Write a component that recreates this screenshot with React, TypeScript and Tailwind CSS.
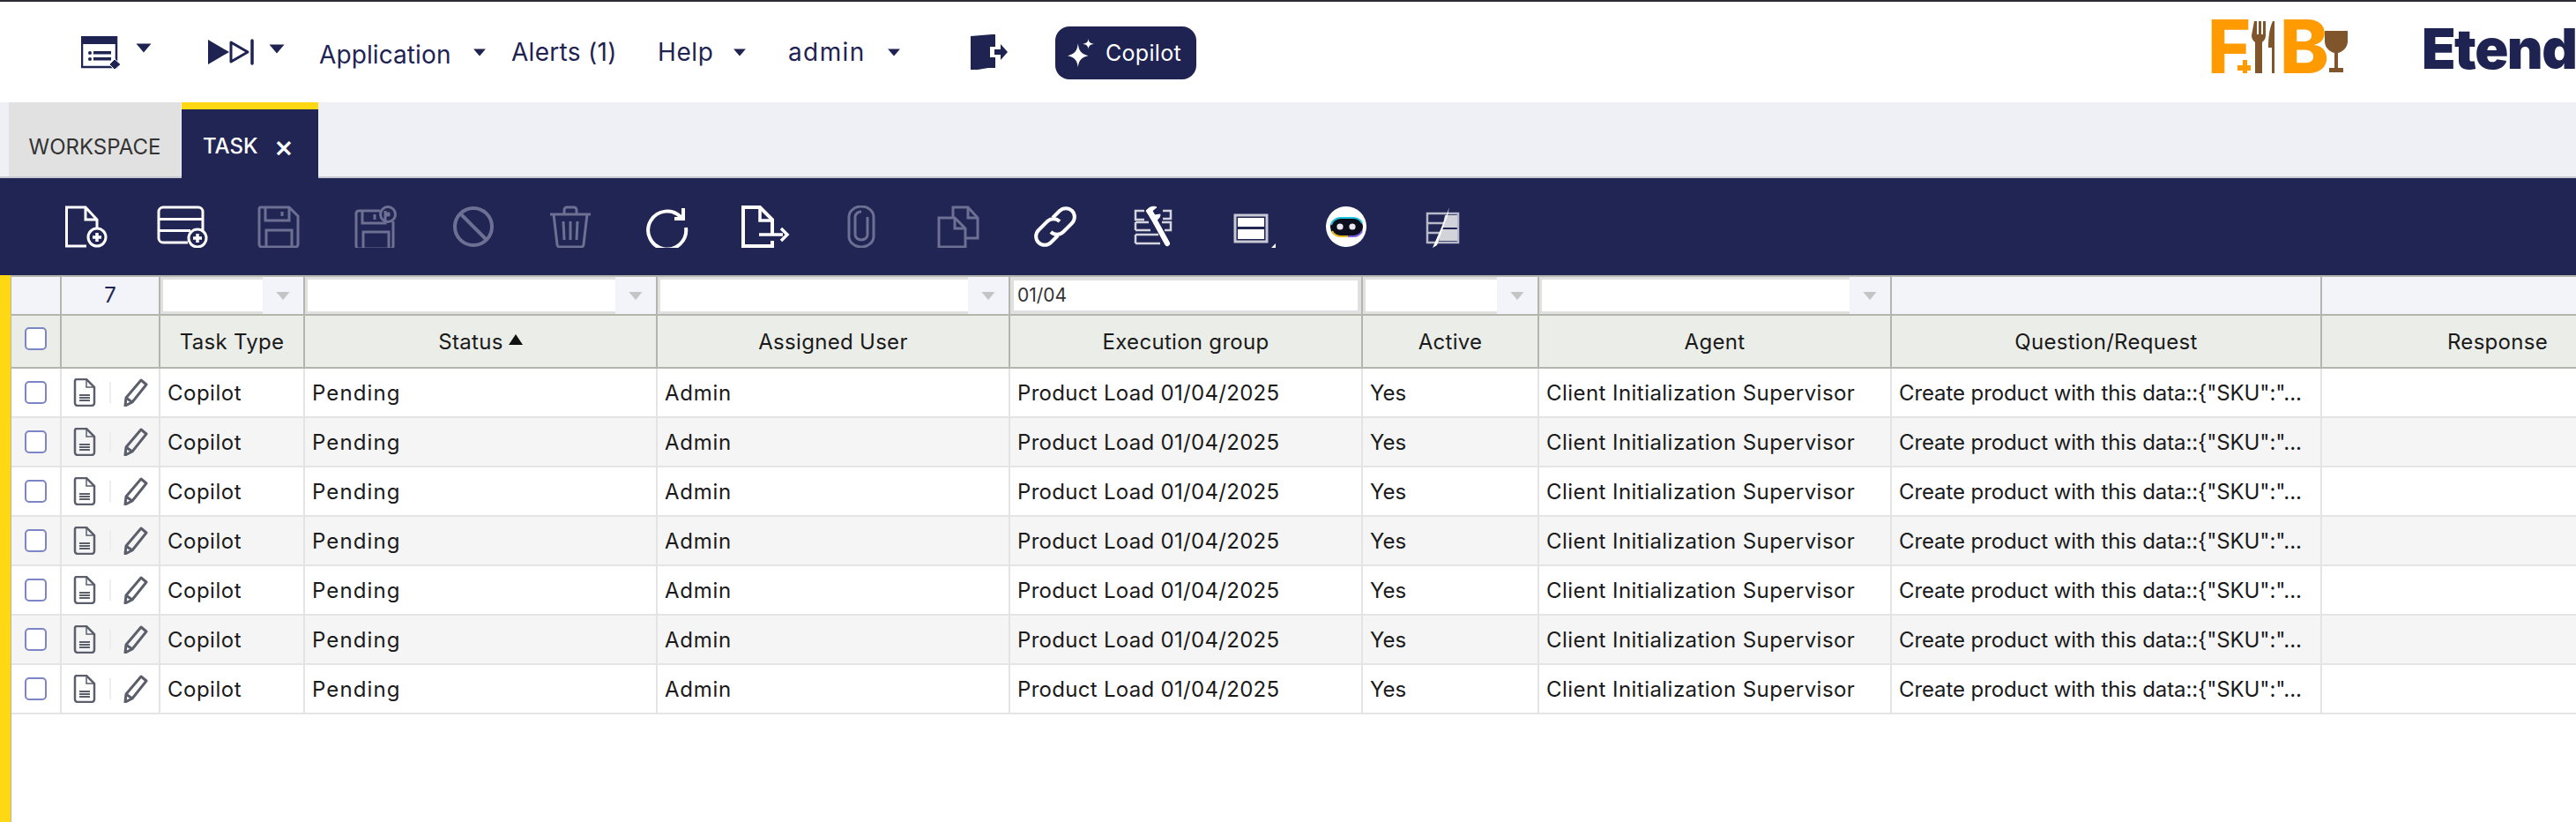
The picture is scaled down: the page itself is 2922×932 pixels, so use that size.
const columns = [
  { name: "Task Type", value: "Copilot", filter: "select", track: "tracking-[0.5px]" },
  { name: "Status", value: "Pending", filter: "select", sorted: true, track: "tracking-[1.1px]" },
  { name: "Assigned User", value: "Admin", filter: "select", track: "tracking-[0.7px]" },
  { name: "Execution group", value: "Product Load 01/04/2025", filter: "text", track: "tracking-[0.3px]" },
  { name: "Active", value: "Yes", filter: "select", track: "tracking-[0px]" },
  { name: "Agent", value: "Client Initialization Supervisor", filter: "select", track: "tracking-[0.45px]" },
  { name: "Question/Request", value: 'Create product with this data::{"SKU":"...', filter: "none", track: "tracking-[-0.1px]" },
  { name: "Response", value: "", filter: "none", track: "" },
];

const gridCols = "grid grid-cols-[57px_112px_164px_400px_400px_400px_200px_400px_488px_400px]";

function Caret({ className }: { className: string }) {
  return (
    <svg viewBox="0 0 18 11" className={className} fill="currentColor">
      <path d="M0.5 0.5h17L9 10.5z" />
    </svg>
  );
}

// toolbar glyphs, all on a 60x48 box
const iconProps = {
  viewBox: "0 0 60 48",
  fill: "none",
  stroke: "currentColor",
  strokeWidth: 3,
  className: "w-[60px] h-[48px]",
};

const toolbarIcons = [
  {
    on: true,
    draw: (
      <>
        <path d="M31 46H8.5V2H30l13 14v9M30 2v14h13" />
        <circle cx="43" cy="36" r="10" />
        <path d="M38 36h10M43 31v10" strokeWidth="3.5" />
      </>
    ),
  },
  {
    on: true,
    draw: (
      <>
        <path d="M36 42H8a5 5 0 0 1-5-5V7a5 5 0 0 1 5-5h40a5 5 0 0 1 5 5v21" />
        <path d="M3 15.5h50M3 28.5h36" />
        <circle cx="47" cy="37" r="10" />
        <path d="M42 37h10M47 32v10" strokeWidth="3.5" />
      </>
    ),
  },
  {
    draw: (
      <>
        <path d="M9 2h32l10 10v32a3 3 0 0 1-3 3H10a3 3 0 0 1-3-3V4a2 2 0 0 1 2-2z" />
        <path d="M14 2v15h27V2M33 7v5M15 47V28h29v19" />
      </>
    ),
  },
  {
    draw: (
      <>
        <path d="M34 6H10a3 3 0 0 0-3 3v37a3 3 0 0 0 3 3h36a3 3 0 0 0 3-3V18" />
        <path d="M14 6v14h26V6M28 10v6M15 49V30h29v19" />
        <circle cx="43" cy="10" r="8.5" />
        <path d="M41 8h4v4h-4z" fill="currentColor" strokeWidth="1" />
      </>
    ),
  },
  {
    draw: (
      <>
        <circle cx="30" cy="24" r="21" strokeWidth="4" />
        <path d="M15 9l30 30" strokeWidth="4" />
      </>
    ),
  },
  {
    draw: (
      <>
        <path d="M7 10h46M23 10V5a3 3 0 0 1 3-3h8a3 3 0 0 1 3 3v5" />
        <path d="M11 10l4 34a3 3 0 0 0 3 3h24a3 3 0 0 0 3-3l4-34" />
        <path d="M22 18l1 21M30 18v21M38 18l-1 21" />
      </>
    ),
  },
  {
    on: true,
    draw: (
      <>
        <path d="M46 14A21.5 21.500 0 1 0 51 25" strokeWidth="4" />
        <path d="M38 15h10V3" strokeWidth="4" />
      </>
    ),
  },
  {
    on: true,
    draw: (
      <>
        <path d="M39 33V16L25 2H6v44h33v-6" strokeWidth="4" />
        <path d="M25 2v15h14M24 33h27" strokeWidth="3.5" />
        <path d="M49 26l7 7-7 7" strokeWidth="3.5" />
      </>
    ),
  },
  {
    draw: (
      <path d="M16 12v23a14 12 0 0 0 28 0V13a14 12 0 0 0-28 0v1M37 13v20a7 6 0 0 1-14 0V13a7 6 0 0 1 7-6" strokeWidth="3" />
    ),
  },
  {
    draw: (
      <>
        <path d="M38 37h14V14L41 2H24v12" />
        <path d="M41 2v12h11" />
        <path d="M8 14h18l12 12v21H8z" />
        <path d="M26 14v12h12" />
      </>
    ),
  },
  {
    on: true,
    draw: (
      <g strokeWidth="4">
        <path d="M27 14l8-8a10 10 0 0 1 14 0 10 10 0 0 1 0 14l-10 10a10 10 0 0 1-14 0" />
        <path d="M33 34l-8 8a10 10 0 0 1-14 0 10 10 0 0 1 0-14l10-10a10 10 0 0 1 14 0" />
      </g>
    ),
  },
  {
    on: true,
    draw: (
      <>
        <path d="M21 6H11v10h10M42 6h9v9H42M11 19h15M11 28h17M11 19v9M41 19h10v9h-7M11 33h26M11 43h28M11 33v10" strokeWidth="2.5" stroke="#d4d4de" />
        <path d="M30 12l17 31" strokeWidth="6" strokeLinecap="round" />
        <path d="M23 6c3-4 8-6 12-4l-5 4 3 5 6-1c0 5-5 8-9 7z" fill="currentColor" strokeWidth="1" />
      </>
    ),
  },
];

function CopilotBot() {
  return (
    <svg viewBox="0 0 48 48" className="w-[48px] h-[48px]">
      <circle cx="24" cy="24" r="23" fill="#fff" />
      <rect x="6" y="14" width="37" height="21" rx="10.500" fill="#0b0f1e" />
      <path d="M7 22c1-5 6-8 11-8h14c4 0 8 2 10 6" fill="none" stroke="#22c3dc" strokeWidth="2" />
      <path d="M8 29c2 4 6 6 10 6h8" fill="none" stroke="#e6bb22" strokeWidth="2" />
      <path d="M26 35h6c4 0 8-2 10-6" fill="none" stroke="#7a5ee0" strokeWidth="2" />
      <circle cx="17" cy="24" r="3.6" fill="#e8e8ee" />
      <circle cx="31" cy="24" r="3.6" fill="#e8e8ee" />
    </svg>
  );
}

function TopNav() {
  return (
    <div className="h-[114px] bg-white flex items-center pl-[92px] shrink-0 relative text-[#1f2352] text-[28px] leading-none whitespace-nowrap">
      <svg viewBox="0 0 46 38" className="w-[46px] h-[38px] mt-[2px]">
        <path d="M1 1h39v34H1z" fill="none" stroke="#1f2352" strokeWidth="2.5" />
        <path d="M0 0h41v9H0z" fill="#1f2352" />
        <path d="M14 17h20v3.5H14zM14 24h20v3.5H14z" fill="#1f2352" />
        <circle cx="10" cy="19" r="2" fill="#1f2352" />
        <circle cx="10" cy="26" r="2" fill="#1f2352" />
        <path d="M38 26l7 6-7 6-6-6z" fill="#1f2352" stroke="#fff" strokeWidth="1" />
      </svg>
      <Caret className="w-[18px] h-[11px] ml-[16px] mb-[10px]" />
      <svg viewBox="0 0 52 30" className="w-[52px] h-[30px] ml-[64px]">
        <path d="M0 1l24 14L0 29z" fill="#1f2352" />
        <path d="M26 4l19 11-19 11z" fill="none" stroke="#1f2352" strokeWidth="3" strokeLinejoin="round" />
        <path d="M50 2v26" stroke="#1f2352" strokeWidth="3.5" strokeLinecap="round" />
      </svg>
      <Caret className="w-[18px] h-[11px] ml-[17px] mb-[8px]" />
      <span className="ml-[39px] mt-[6px] w-[146px] tracking-[0.1px]">Application</span>
      <Caret className="w-[18px] h-[9px] ml-[27px]" />
      <span className="ml-[27px] w-[119px] tracking-[0.3px]">Alerts (1)</span>
      <span className="ml-[47px] w-[62px] tracking-[0.6px]">Help</span>
      <Caret className="w-[18px] h-[9px] ml-[22px]" />
      <span className="ml-[46px] w-[91px] tracking-[1.4px]">admin</span>
      <Caret className="w-[18px] h-[9px] ml-[20px]" />
      <svg viewBox="0 0 42 40" className="w-[42px] h-[40px] ml-[78px]">
        <path d="M0 2l24-2h4v14h-6v12h6v12H20l-12 2H0z" fill="#1f2352" />
        <path d="M27 17h7v-6l8 9-8 9v-6h-7z" fill="#1f2352" />
      </svg>
      <button className="ml-[54px] w-[160px] h-[60px] mt-[2px] rounded-[16px] bg-[#1f2352] text-white text-[25px] tracking-[0.3px] flex items-center pl-[14px] gap-[13px]">
        <svg viewBox="0 0 28 30" className="w-[30px] h-[32px]" fill="#fff">
          <path d="M11 5c1 8 3 11 11 13-8 2-10 5-11 12-1-7-3-10-11-12 8-2 10-5 11-13z" />
          <path d="M22 0c.5 3.500 1.500 4.500 6 5.500-4.500 1-5.500 2-6 5.500-.5-3.500-1.500-4.500-6-5.500 4.500-1 5.500-2 6-5.500z" />
        </svg>
        Copilot
      </button>
      <div className="absolute left-[2504px] top-[21px] h-[60px] flex items-end text-[#ff9a00] font-['Inter',sans-serif] font-extrabold text-[84px] leading-[60px]">
        <span className="h-[60px] w-[44px]">F</span>
        <svg viewBox="0 0 52 60" className="w-[52px] h-[60px] -ml-[20px] shrink-0">
          <path d="M16 45v6h-6v6h6v3h5v-3h4v-6h-4v-6z" fill="#ff9a00" />
          <path d="M29 1h3v15h2V1h3v15h2V1h3v16c0 5-3 7-4 8v35h-8V25c-1-1-4-3-4-8z" fill="#80552b" />
          <path d="M50 1c-4 8-5 20-5 30h4v29h3V1z" fill="#80552b" />
        </svg>
        <span className="w-[48px] ml-[6px]">B</span>
        <svg viewBox="0 0 28 60" className="w-[28px] h-[60px] ml-[2px] shrink-0">
          <path d="M1 12h26v12c0 7-6 12-11 13v17h6v5H6v-5h6V37C7 36 1 31 1 24z" fill="#80552b" />
        </svg>
      </div>
      <span className="absolute left-[2747px] top-[15px] font-['Inter',sans-serif] font-black text-[63px] leading-[76px] tracking-[-1.5px] text-[#1f2352]">
        Etend
      </span>
    </div>
  );
}

function Tabs() {
  return (
    <div className="h-[86px] bg-[#eff0f5] border-b-2 border-[#c8c8d0] flex pl-[10px] shrink-0 text-[24px] leading-none">
      <div className="w-[195px] bg-[#e1e1e1] flex items-center justify-center pt-[18px] text-[#333]">WORKSPACE</div>
      <div className="w-[155px] ml-[1px] h-[86px] bg-[#202553] border-t-8 border-[#ffd814] flex items-center pl-[24px] pt-[6px] text-white font-medium">
        TASK
        <span className="ml-[18px] font-medium text-[34px] leading-[24px]">×</span>
      </div>
    </div>
  );
}

function Toolbar() {
  return (
    <div className="h-[110px] bg-[#202553] flex items-center pl-[42px] shrink-0">
      {toolbarIcons.map((icon, i) => (
        <button
          key={i}
          className={`w-[110px] h-full flex items-center justify-center ${icon.on ? "text-white" : "text-[#6d7093]"}`}
        >
          <svg {...iconProps}>{icon.draw}</svg>
        </button>
      ))}
      <button className="w-[110px] h-full flex items-center justify-center">
        <svg viewBox="0 0 60 48" className="w-[60px] h-[48px]">
          <rect x="14" y="11" width="36" height="30" fill="none" stroke="#c8c9d4" strokeWidth="3" />
          <rect x="17" y="14" width="30" height="10" fill="#fff" />
          <rect x="17" y="27" width="30" height="11" fill="#fff" />
          <path d="M60 43v8h-8z" fill="#fff" />
        </svg>
      </button>
      <button className="w-[110px] h-full flex items-center justify-center">
        <CopilotBot />
      </button>
      <button className="w-[110px] h-full flex items-center justify-center">
        <svg viewBox="0 0 60 48" className="w-[60px] h-[48px]">
          <path d="M12 9h35v33H12zM12 20h22M12 31h18" fill="none" stroke="#b8b9c8" strokeWidth="2.500" />
          <path d="M32 11h14v14H29zM28 27h18v13H25z" fill="#d2d2da" />
          <path d="M37 2l-6 16-13 30 5-3 12-34z" fill="#fff" />
        </svg>
      </button>
    </div>
  );
}

function FilterRow() {
  return (
    <div className={`${gridCols} h-[46px] bg-[#f2f4f9] border-y-2 border-[#b4b6ae]`}>
      <div className="border-r-2 border-[#b4b6ae]" />
      <div className="border-r-2 border-[#b4b6ae] flex items-center justify-center text-[#202553] text-[24px]">7</div>
      {columns.map((col) => (
        <div key={col.name} className="border-r-2 border-[#b4b6ae] flex">
          {col.filter === "select" && (
            <>
              <div className="flex-1 min-w-0 bg-white border-[3px] border-[#e0e0e0] border-r-0" />
              <div className="w-[46px] flex items-center justify-center text-[#c4c4c4]">
                <Caret className="w-[16px] h-[11px]" />
              </div>
            </>
          )}
          {col.filter === "text" && (
            <div className="flex-1 min-w-0 bg-white border-4 border-[#e0e0e0] text-[21px] leading-[34px] pl-[4px] text-[#333]">
              01/04
            </div>
          )}
        </div>
      ))}
    </div>
  );
}

function HeaderRow() {
  return (
    <div className={`${gridCols} h-[60px] bg-[#ebede8] border-b-2 border-[#b4b6ae] text-[24px] text-[#1a1a1a] tracking-[0.3px]`}>
      <div className="border-r-2 border-[#b4b6ae] flex items-center pl-[15px]">
        <span className="w-[25px] h-[26px] mb-[6px] rounded-[5px] border-2 border-[#7d86c4] bg-white" />
      </div>
      <div className="border-r-2 border-[#b4b6ae]" />
      {columns.map((col) => (
        <div key={col.name} className="border-r-2 border-[#b4b6ae] flex items-center justify-center gap-[6px] pt-[1px]">
          {col.name}
          {col.sorted && (
            <svg viewBox="0 0 16 12" className="w-[16px] h-[12px] mb-[6px]">
              <path d="M8 0l8 12H0z" fill="#111" />
            </svg>
          )}
        </div>
      ))}
    </div>
  );
}

function TaskRow({ striped }: { striped: boolean }) {
  return (
    <div className={`${gridCols} h-[56px] border-b-2 border-[#e4e4e4] text-[24px] text-[#1a1a1a] ${striped ? "bg-[#f5f5f5]" : "bg-white"}`}>
      <div className="border-r-2 border-[#e4e4e4] flex items-center pl-[15px]">
        <span className="w-[25px] h-[26px] rounded-[5px] border-2 border-[#7d86c4] bg-white" />
      </div>
      <div className="border-r-2 border-[#e4e4e4] flex items-center pl-[13px] text-[#5b5f6b]">
        <svg viewBox="0 0 26 32" className="w-[26px] h-[32px]" fill="none" stroke="currentColor" strokeWidth="2.5">
          <path d="M2 3a2 2 0 0 1 2-2h11l9 9v18a3 3 0 0 1-3 3H5a3 3 0 0 1-3-3z" />
          <path d="M15 1v9h9" strokeWidth="1.5" />
          <path d="M7 18h12v8H7z" fill="currentColor" strokeWidth="0" />
          <path d="M6 20.500h14M6 23.500h14" stroke="#fff" strokeWidth="1" />
        </svg>
        <span className="w-[2px] h-[24px] bg-[#eeeeee] ml-[15px]" />
        <svg viewBox="0 0 28 32" className="w-[28px] h-[32px] ml-[14px]" fill="none" stroke="currentColor" strokeWidth="3">
          <path d="M20 2l6 5L10 27l-8 4 1-9z" strokeLinejoin="round" />
          <path d="M3 22l7 5" />
        </svg>
      </div>
      {columns.map((col) => (
        <div key={col.name} className={`border-r-2 border-[#e4e4e4] flex items-center pl-[8px] pt-[1px] whitespace-nowrap overflow-hidden ${col.track}`}>
          {col.value}
        </div>
      ))}
    </div>
  );
}

export default function App() {
  return (
    <div className="w-[2922px] h-[932px] overflow-hidden flex flex-col bg-white font-['Inter','Noto_Sans',sans-serif] border-t-2 border-[#2d2d33]">
      <TopNav />
      <Tabs />
      <Toolbar />
      <div className="flex-1 flex min-h-0">
        <div className="w-[12px] bg-[#ffd814] shrink-0" />
        <div className="w-px shrink-0 bg-[#b4b6ae]" />
        <div className="flex-1 min-w-0 overflow-hidden">
          <FilterRow />
          <HeaderRow />
          {[0, 1, 2, 3, 4, 5, 6].map((i) => (
            <TaskRow key={i} striped={i % 2 === 1} />
          ))}
        </div>
      </div>
    </div>
  );
}
